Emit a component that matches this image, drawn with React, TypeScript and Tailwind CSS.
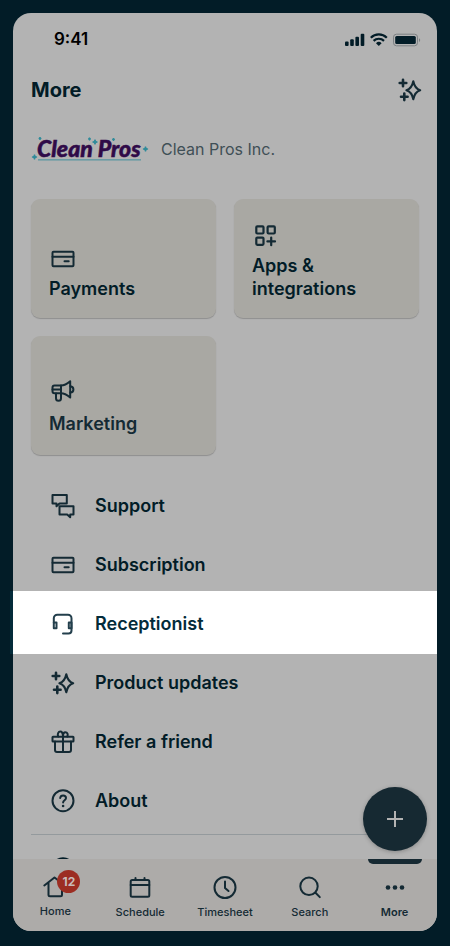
import React from "react";

type IconProps = { className?: string };

function Icon({ children, className = "size-7" }: IconProps & { children: React.ReactNode }) {
  return (
    <svg
      viewBox="0 0 28 28"
      className={`shrink-0 ${className}`}
      fill="none"
      stroke="currentColor"
      strokeWidth="2"
      strokeLinecap="round"
      strokeLinejoin="round"
      aria-hidden="true"
    >
      {children}
    </svg>
  );
}

const CardIcon = () => (
  <Icon>
    <rect x="3.500" y="6.800" width="21" height="14.500" rx="1" />
    <path d="M3.500 11.700h21M15.500 16.300h4.200" />
  </Icon>
);

const AppsIcon = () => (
  <Icon>
    <g strokeWidth="2.200">
      <rect x="4.300" y="4.300" width="7.200" height="7.200" rx="1" />
      <rect x="15.600" y="4.300" width="7.200" height="7.200" rx="1" />
      <rect x="4.300" y="15.600" width="7.200" height="7.200" rx="1" />
      <path d="M19.200 15.600v7.600M15.400 19.400h7.600" />
    </g>
  </Icon>
);

const MegaphoneIcon = () => (
  <Icon>
    <path d="M12 9.500H5.500a2 2 0 0 0-2 2v3.800a2 2 0 0 0 2 2H12c3.500 0 6.500 2 9.200 4.200V5.200C18.500 7.500 15.500 9.500 12 9.500Z" />
    <path d="M12 9.500v7.800M3.500 13.500H12M21.300 10.200c1.700.2 3.100 1.500 3.100 3.200s-1.400 3-3.100 3.200M7 17.500v4.700a2.500 2.500 0 0 0 5 0v-4.700" />
  </Icon>
);

const ChatIcon = () => (
  <Icon>
    <path d="M3.500 3h14.300v8.500H10.500l-3 2.800v-2.800h-4Z" />
    <path d="M10.500 14.200h14v8.300h-3.300v2.800l-3-2.800h-7.700Z" />
  </Icon>
);

const HeadsetIcon = () => (
  <Icon>
    <path d="M7.500 12.500H4.800v5.800h2.700ZM22.500 12.500h-2.700v5.800h2.700Z" />
    <path d="M4.800 12.500V8.200a3.500 3.500 0 0 1 3.500-3.500H19a3.500 3.500 0 0 1 3.500 3.500v12.300a3 3 0 0 1-3 3h-5.500" />
  </Icon>
);

const SparklesIcon = () => (
  <Icon>
    <path
      d="M17.300 5.200c1.100 5.300 2.700 7.800 6.900 9-4.200 1.200-5.800 3.700-6.900 9-1.100-5.300-2.700-7.800-6.900-9 4.200-1.200 5.800-3.700 6.900-9Z"
      strokeWidth="2.100"
    />
    <path d="M7 3.700v6.600M3.700 7h6.600M8.300 17.500v6.600M5 20.800h6.600" strokeWidth="2.600" />
  </Icon>
);

const GiftIcon = () => (
  <Icon>
    <rect x="3.500" y="8.800" width="21" height="4.700" rx="0.500" />
    <path d="M6 13.500v8.500a2 2 0 0 0 2 2h12a2 2 0 0 0 2-2v-8.500M14 8.800V24" />
    <path d="M9.200 8.500c-1-2.500 0-5 2.200-5 1.500 0 2.300 1.500 2.600 4.500 0-2.500.800-3.700 2.300-3.700 2.200 0 3 2 2 4.200" />
  </Icon>
);

const HelpIcon = () => (
  <Icon>
    <circle cx="14" cy="13.700" r="10.500" />
    <path d="M11.200 11c.2-1.600 1.300-2.500 2.900-2.500 1.700 0 2.900 1 2.900 2.500 0 2.200-2.900 2.300-2.900 4.600" />
    <circle cx="14.100" cy="19" r="0.600" fill="currentColor" strokeWidth="1.400" />
  </Icon>
);

const HomeIcon = () => (
  <Icon>
    <path d="M3.300 12.500 13.500 4.500 24 12.500M7.500 10v11.700a1.500 1.500 0 0 0 1.500 1.500h10.500a1.500 1.500 0 0 0 1.500-1.500V10" />
  </Icon>
);

const CalendarIcon = () => (
  <Icon>
    <rect x="4.700" y="7" width="18.600" height="16.800" rx="1.500" />
    <path d="M4.700 12h18.600M9.500 5v2M18.500 5v2" />
  </Icon>
);

const ClockIcon = () => (
  <Icon>
    <circle cx="14" cy="14.500" r="10.500" />
    <path d="M14 8.500V15l3.500 3" />
  </Icon>
);

const SearchIcon = () => (
  <Icon>
    <circle cx="13" cy="13.300" r="8.700" />
    <path d="m19.500 19.800 4.300 4.300" />
  </Icon>
);

const DotsIcon = () => (
  <Icon>
    <g fill="currentColor" stroke="none">
      <circle cx="7" cy="14.500" r="2.300" />
      <circle cx="14" cy="14.500" r="2.300" />
      <circle cx="21" cy="14.500" r="2.300" />
    </g>
  </Icon>
);

function StatusIcons() {
  return (
    <svg viewBox="0 0 76 14" className="h-3.5 w-[76px] text-[#021c27]" fill="currentColor" aria-hidden="true">
      <rect x="0" y="8.500" width="3.600" height="4.500" rx="1" />
      <rect x="5.200" y="6.200" width="3.600" height="6.800" rx="1" />
      <rect x="10.400" y="3.700" width="3.600" height="9.300" rx="1" />
      <rect x="15.700" y="0.800" width="3.600" height="12.200" rx="1" />
      <g fill="none" stroke="currentColor" strokeWidth="2.200">
        <path d="M25.800 4.700a11.500 11.500 0 0 1 16 0" />
        <path d="M28.600 7.900a7.400 7.400 0 0 1 10.400 0" />
      </g>
      <path d="M31 10.200a4 4 0 0 1 5.600 0L33.800 13Z" />
      <rect x="48.500" y="1.200" width="24" height="11.600" rx="3" fill="none" stroke="#7c8083" />
      <rect x="50.200" y="2.900" width="20.600" height="8.200" rx="1.500" />
      <path d="M74 5.200c1.600.7 1.600 3 0 3.700Z" fill="#7c8083" />
    </svg>
  );
}

const star = (x: number, y: number, r: number) =>
  `M${x} ${y - r}Q${x} ${y} ${x + r} ${y}Q${x} ${y} ${x} ${y + r}Q${x} ${y} ${x - r} ${y}Q${x} ${y} ${x} ${y - r}Z`;

function Logo() {
  return (
    <svg viewBox="0 -6 118 40" className="h-10 w-[118px]" role="img" aria-label="Clean Pros">
      <text
        x="6"
        y="22"
        fill="#2f0a48"
        stroke="#2f0a48"
        strokeWidth="0.500"
        className="font-['Lato','Open_Sans',sans-serif] text-[23px] font-black italic"
      >
        Clean Pros
      </text>
      <rect x="7" y="24" width="103" height="1.600" fill="#6b9ca5" />
      <g fill="#2f8b9a" stroke="#2f8b9a" strokeWidth="1.200">
        <path d={star(3.5, 22, 2.6)} />
        <path d={star(9, 3.5, 1.4)} />
        <path d={star(58.5, 4, 1.4)} />
        <path d={star(64, 7, 2.6)} />
        <path d={star(82.5, 4.5, 1.4)} />
        <path d={star(114.5, 14, 2.6)} />
      </g>
    </svg>
  );
}

const tiles = [
  { label: "Payments", icon: <CardIcon />, look: "gap-1 pb-[18px]" },
  { label: "Apps & integrations", icon: <AppsIcon />, look: "gap-1 pb-[18px]" },
  { label: "Marketing", icon: <MegaphoneIcon />, look: "gap-2 pb-5 text-[#142a34]" },
];

const rows = [
  { label: "Support", icon: <ChatIcon /> },
  { label: "Subscription", icon: <CardIcon /> },
  { label: "Receptionist", icon: <HeadsetIcon />, highlighted: true },
  { label: "Product updates", icon: <SparklesIcon /> },
  { label: "Refer a friend", icon: <GiftIcon /> },
  { label: "About", icon: <HelpIcon /> },
];

const tabs = [
  { label: "Home", icon: <HomeIcon />, badge: "12" },
  { label: "Schedule", icon: <CalendarIcon /> },
  { label: "Timesheet", icon: <ClockIcon /> },
  { label: "Search", icon: <SearchIcon /> },
  { label: "More", icon: <DotsIcon />, active: true },
];

export default function App() {
  return (
    <div className="min-h-screen bg-[#021c27] px-[13px] pt-[13px] pb-[15px] font-['Inter','Liberation_Sans',sans-serif] text-[#021c27]">
      <div className="relative rounded-[18px] bg-[#b3b3b3]">
        <div className="flex h-[54px] items-center justify-between pr-4 pl-[41px]">
          <span className="text-[17px] font-semibold text-black">9:41</span>
          <StatusIcons />
        </div>

        <header className="flex h-[46px] items-center justify-between pr-[13px] pl-[18px]">
          <h1 className="text-xl font-bold">More</h1>
          <button type="button" aria-label="Assistant" className="text-[#142a34]">
            <SparklesIcon />
          </button>
        </header>

        <div className="flex h-[72px] items-center gap-3 pl-[18px]">
          <Logo />
          <span className="text-base text-[#3f4f56]">Clean Pros Inc.</span>
        </div>

        <div className="grid grid-cols-2 gap-[18px] px-[18px] pt-[14px]">
          {tiles.map((tile) => (
            <button
              key={tile.label}
              type="button"
              className={`flex h-[119px] flex-col items-start justify-end rounded-[9px] bg-[#a9a8a3] pr-8 pl-[18px] text-left text-lg leading-[23px] font-semibold shadow-[0_1px_1px_rgba(0,0,0,0.2)] ${tile.look}`}
            >
              <span className="text-[#142a34]">{tile.icon}</span>
              {tile.label}
            </button>
          ))}
        </div>

        <ul className="pt-[21px]">
          {rows.map((row) => (
            <li
              key={row.label}
              className={
                row.highlighted
                  ? "relative -mt-[3px] -mb-px bg-white pt-[3px] pb-px text-[#032b3a] before:absolute before:inset-y-0 before:-left-[3px] before:w-[3px] before:bg-[#032b3a]"
                  : ""
              }
            >
              <button
                type="button"
                className="flex h-[59px] w-full items-center gap-[18px] pl-9 text-left text-lg font-semibold"
              >
                <span className={row.highlighted ? "text-[#233f4c]" : "text-[#142a34]"}>{row.icon}</span>
                {row.label}
              </button>
            </li>
          ))}
        </ul>

        <div className="mx-[18px] mt-1 h-px bg-[#949a9d]" />
        <div className="h-6 overflow-hidden pt-5 pl-9">
          <HelpIcon />
        </div>

        <button
          type="button"
          aria-label="Create"
          className="absolute right-[10px] bottom-20 flex size-16 items-center justify-center rounded-full bg-[#162932] text-[#b3b3b3] shadow-[0_1px_4px_rgba(0,0,0,0.25)]"
        >
          <Icon>
            <path d="M14 6v16M6 14h16" strokeLinecap="butt" />
          </Icon>
        </button>

        <nav className="grid h-[72px] grid-cols-5 rounded-b-[18px] bg-[#adaba9] text-[#142a34]">
          {tabs.map((tab) => (
            <a
              key={tab.label}
              href="#"
              aria-current={tab.active ? "page" : undefined}
              className={`relative flex flex-col items-center pt-[14px] text-[11px] leading-[14px] ${
                tab.active ? "font-semibold" : "font-medium"
              } ${tab.badge ? "gap-[3px]" : "gap-1"}`}
            >
              {tab.active && (
                <span className="absolute top-0 h-[5px] w-[54px] rounded-b-[5px] bg-[#162932]" />
              )}
              {tab.icon}
              {tab.badge && (
                <span className="absolute top-[11px] left-1/2 ml-[2px] flex size-[23px] items-center justify-center rounded-full bg-[#9c2d22] text-xs font-bold text-[#c9bcb9]">
                  {tab.badge}
                </span>
              )}
              {tab.label}
            </a>
          ))}
        </nav>
      </div>
    </div>
  );
}
